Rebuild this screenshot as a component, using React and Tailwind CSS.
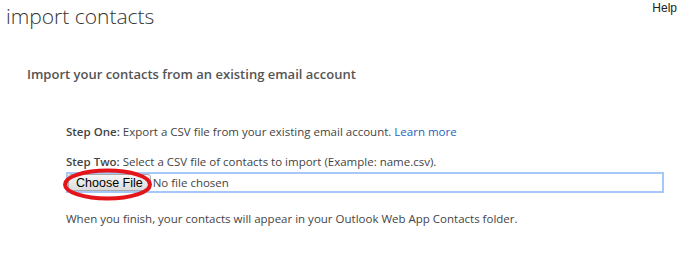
export default function App() {
  return (
    <div className="relative w-[695px] h-[254px] bg-white text-[#444]" style={{ fontFamily: '"Open Sans", sans-serif' }}>
      <div className="flex justify-between">
        <div className="pl-[6px] pt-[1px] text-[21px] leading-[30px] font-light text-[#333]">import contacts</div>
        <div className="pr-[18px] pt-[1px] text-[12px] leading-[14px] text-[#222]" style={{ fontFamily: '"Liberation Sans", sans-serif' }}>Help</div>
      </div>
      <div className="pl-[27px] pt-[34px] text-[13px] leading-[18px] font-semibold text-[#555]">Import your contacts from an existing email account</div>
      <div className="pl-[66px] pt-[41px] text-[11.5px] leading-[16px]">
        <div><span className="font-semibold">Step One:</span> Export a CSV file from your existing email account. <span className="text-[#1e5fc2]">Learn more</span></div>
        <div className="pt-[14px]"><span className="font-semibold">Step Two:</span> Select a CSV file of contacts to import (Example: name.csv).</div>
        <div className="relative mt-[2px] w-[598px] h-[21px] border-2 border-[#a6c8f8] flex items-center">
          <div className="h-[17px] pl-[7px] pr-[7px] flex items-center border border-[#aaa] rounded-[3px] bg-gradient-to-b from-[#f6f6f6] to-[#dcdcdc] text-[12.5px] text-black" style={{ fontFamily: '"Liberation Sans", sans-serif' }}>Choose File</div>
          <div className="ml-[2px] text-[11.5px] text-[#444]">No file chosen</div>
          <svg className="absolute left-[-10px] top-[-6px]" width="100" height="34" viewBox="0 0 100 34">
            <ellipse cx="49.5" cy="16.5" rx="42.5" ry="14" fill="none" stroke="#e4141b" strokeWidth="4" />
          </svg>
        </div>
        <div className="pt-[18px]">When you finish, your contacts will appear in your Outlook Web App Contacts folder.</div>
      </div>
    </div>
  );
}
